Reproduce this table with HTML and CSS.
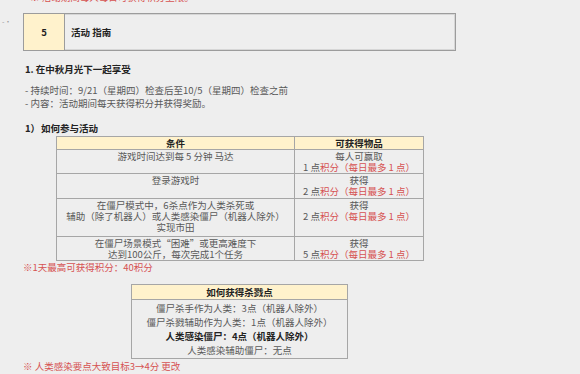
FILE: index.html
```html
<!DOCTYPE html>
<html lang="zh-CN">
<head>
<meta charset="utf-8">
<link rel="stylesheet" href="styles.css">
</head>
<body>
<div class="page">
  <div class="clip"><span class="red">※ 活动期间每人每日可获得积分上限。</span></div>
  <div class="head-row">
    <span class="marker">-·</span>
    <div class="head-box">
      <div class="head-num">5</div>
      <div class="head-title">活动 指南</div>
    </div>
  </div>
  <h2 class="sec">1. 在中秋月光下一起享受</h2>
  <div class="info">
    <div>- 持续时间：9/21（星期四）检查后至10/5（星期四）检查之前</div>
    <div>- 内容：活动期间每天获得积分并获得奖励。</div>
  </div>
  <h3 class="sub"><span class="sub-num">1）</span>如何参与活动</h3>
  <table class="tbl main">
    <thead>
      <tr><th class="c1">条件</th><th class="c2">可获得物品</th></tr>
    </thead>
    <tbody>
      <tr class="r1">
        <td>游戏时间达到每 5 分钟 马达</td>
        <td>每人可赢取<br>1 点<span class="red">积分（每日最多 1 点）</span></td>
      </tr>
      <tr class="r2">
        <td>登录游戏时</td>
        <td>获得<br>2 点<span class="red">积分（每日最多 1 点）</span></td>
      </tr>
      <tr class="r3">
        <td>在僵尸模式中，6杀点作为人类杀死或<br>辅助（除了机器人）或人类感染僵尸（机器人除外）<br>实现市田</td>
        <td>获得<br>2 点<span class="red">积分（每日最多 1 点）</span></td>
      </tr>
      <tr class="r4">
        <td>在僵尸场景模式“困难”或更高难度下<br>达到100公斤，每次完成1个任务</td>
        <td>获得<br>5 点<span class="red">积分（每日最多 1 点）</span></td>
      </tr>
    </tbody>
  </table>
  <p class="note red">※1天最高可获得积分：40积分</p>
  <table class="tbl kill">
    <thead>
      <tr><th>如何获得杀戮点</th></tr>
    </thead>
    <tbody>
      <tr>
        <td>
          <div>僵尸杀手作为人类：3点（机器人除外）</div>
          <div>僵尸杀戮辅助作为人类：1点（机器人除外）</div>
          <div class="strong">人类感染僵尸：4点（机器人除外）</div>
          <div>人类感染辅助僵尸：无点</div>
        </td>
      </tr>
    </tbody>
  </table>
  <p class="note red last">※ 人类感染要点大致目标3→4分 更改</p>
</div>
</body>
</html>
```
FILE: styles.css
```css
html, body {
  margin: 0;
  padding: 0;
  background: #eeeeee;
}
body {
  font-family: "Noto Sans CJK SC", "Noto Sans", sans-serif;
  font-size: 9.5px;
  color: #595959;
}
.page {
  width: 580px;
  height: 374px;
  overflow: hidden;
}
.red {
  color: #d65252;
}
.clip {
  height: 3px;
  overflow: hidden;
  display: flex;
  align-items: flex-end;
  padding-left: 30px;
}
.clip span {
  line-height: 12px;
  flex: none;
}
.head-row {
  display: flex;
  align-items: flex-start;
  margin-top: 10px;
}
.marker {
  width: 23px;
  font-size: 7px;
  line-height: 8px;
  color: #9a9a9a;
  padding-top: 4px;
  padding-left: 2px;
  box-sizing: border-box;
}
.head-box {
  width: 433px;
  height: 38px;
  box-sizing: border-box;
  border: 1px solid #9c9c9c;
  box-shadow: inset 0 0 0 1px #d6d6d6;
  display: flex;
}
.head-num {
  width: 40px;
  background: #fff2cc;
  border-right: 1px solid #9c9c9c;
  display: flex;
  align-items: center;
  justify-content: center;
  font-weight: bold;
  color: #222;
}
.head-title {
  display: flex;
  align-items: center;
  padding-left: 6px;
  font-weight: bold;
  color: #222;
}
.sec {
  margin: 12px 0 0 25px;
  font-size: 9.5px;
  line-height: 13px;
  font-weight: bold;
  color: #222;
}
.info {
  margin: 8px 0 0 25px;
  line-height: 13px;
}
.sub {
  margin: 12px 0 0 25px;
  font-size: 9.5px;
  line-height: 13px;
  font-weight: bold;
  color: #222;
}
.sub-num {
  display: inline-block;
  width: 16px;
}
.tbl {
  border-collapse: collapse;
  font-size: 9.5px;
  text-align: center;
}
.tbl th {
  background: #fff2cc;
  color: #222;
  font-weight: bold;
  border: 1px solid #a6a6a6;
  padding: 0;
}
.tbl td {
  border: 1px solid #a6a6a6;
  vertical-align: top;
  padding: 1px 0 0 0;
}
.main {
  margin: 1px 0 0 56px;
  width: 368px;
  line-height: 11px;
}
.main th {
  height: 12px;
  line-height: 12px;
}
.main .c1 {
  width: 237px;
}
.main .r1 td { height: 22px; }
.main .r2 td { height: 23px; }
.main .r3 td { height: 36px; }
.main .r4 td { height: 22px; }
.note {
  margin: 0 0 0 23px;
  line-height: 12px;
}
.kill {
  margin: 11px 0 0 131px;
  width: 217px;
  line-height: 14px;
}
.kill th {
  height: 14px;
  line-height: 14px;
}
.kill td {
  padding: 1px 0 1px 0;
}
.kill .strong {
  font-weight: bold;
  color: #222;
}
.note.last {
  margin-top: 1px;
}
```
